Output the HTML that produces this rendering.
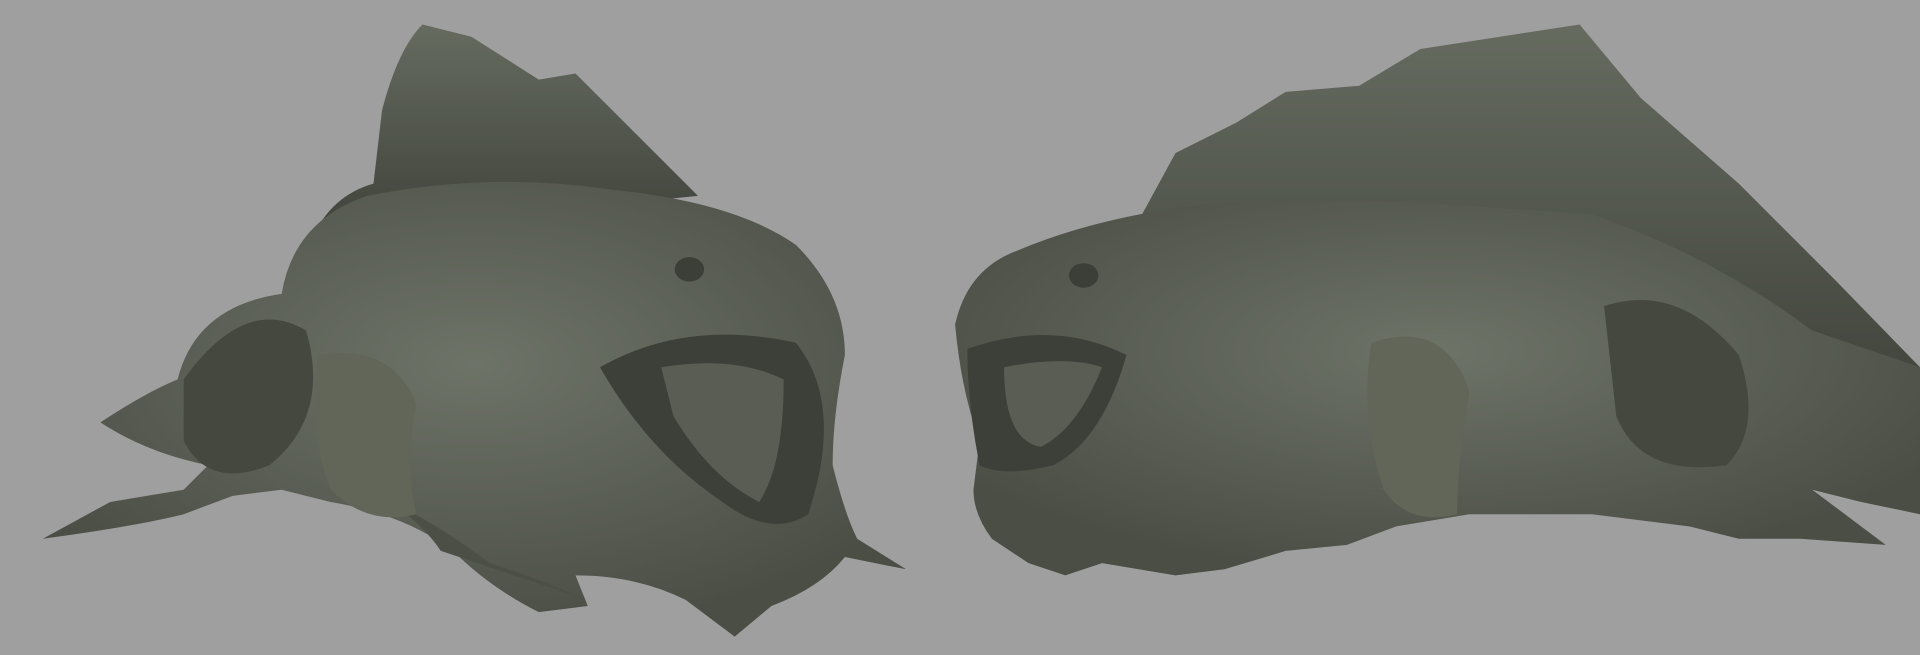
<!DOCTYPE html>
<html><head><meta charset="utf-8"><style>
html,body{margin:0;padding:0;background:#9f9f9f;width:1920px;height:655px;overflow:hidden}
svg{display:block}
</style></head><body>
<svg width="1920" height="655" viewBox="0 0 1568 535" preserveAspectRatio="none">
<defs>
<radialGradient id="g" cx="50%" cy="40%" r="60%">
<stop offset="0" stop-color="#6e7368"/><stop offset="1" stop-color="#4a4e45"/>
</radialGradient>
<linearGradient id="s" x1="0" y1="0" x2="0" y2="1">
<stop offset="0" stop-color="#666b60"/><stop offset="1" stop-color="#3e423a"/>
</linearGradient>
</defs>
<rect width="1568" height="535" fill="#9f9f9f"/>
<!-- LEFT creature -->
<path d="M255,195 Q270,160 305,150 L312,90 Q325,40 345,20 L385,30 L440,65 L470,60 L520,110 L570,160 L470,170 L330,165 Z" fill="url(#s)"/>
<path d="M82,345 Q120,320 145,310 Q160,250 230,240 Q240,180 300,160 Q400,140 500,155 Q600,165 650,200 Q690,240 690,290 Q680,340 680,380 Q690,420 700,440 L740,465 L690,455 Q670,480 630,495 L600,520 L560,490 Q520,470 470,470 L480,495 L440,500 Q400,480 370,450 Q330,420 270,410 L230,400 L190,405 L150,420 Q110,430 35,440 L90,410 L150,400 L170,380 Q120,370 82,345 Z" fill="url(#g)"/>
<path d="M300,400 Q340,420 360,450 L420,470 L480,490 L430,470 L400,460 Q360,430 320,410 Z" fill="#4b4f46"/>
<path d="M150,310 Q200,240 250,270 Q270,340 220,380 Q170,400 150,360 Z" fill="#44483f"/>
<path d="M490,300 Q560,260 650,280 Q690,330 660,420 Q630,440 590,410 Q530,370 490,300 Z" fill="#3d4038"/>
<path d="M540,300 Q600,290 640,310 Q640,380 620,410 Q580,390 550,340 Z" fill="#595d53"/>
<ellipse cx="563" cy="220" rx="12" ry="10" fill="#3c3f37"/>
<path d="M260,290 Q320,280 340,330 Q330,380 340,420 Q300,430 270,400 Q250,350 260,290 Z" fill="#616659"/>
<!-- RIGHT creature -->
<path d="M930,180 L960,125 L1010,100 L1050,75 L1110,70 L1160,40 L1290,20 L1340,80 L1420,150 L1500,230 L1568,300 L1568,340 L1400,230 L1200,170 L1000,175 Z" fill="url(#s)"/>
<path d="M780,265 Q790,220 830,205 Q900,175 1000,165 L1150,165 L1300,175 Q1400,210 1480,270 L1568,300 L1568,420 L1520,410 L1480,400 L1540,445 L1470,440 L1420,440 L1380,430 L1300,420 L1200,420 L1140,430 L1100,445 L1050,450 L1000,465 L960,470 L900,460 L870,470 L840,460 L810,440 Q795,420 795,400 L800,360 Q785,320 780,265 Z" fill="url(#g)"/>
<path d="M1310,250 Q1370,230 1420,290 Q1440,350 1410,380 Q1340,390 1320,340 Z" fill="#44483f"/>
<path d="M790,285 Q860,260 920,290 Q900,360 860,380 Q820,390 800,380 Q790,330 790,285 Z" fill="#3d4038"/>
<path d="M820,300 Q870,290 900,300 Q880,350 850,365 Q820,360 820,300 Z" fill="#595d53"/>
<ellipse cx="885" cy="225" rx="12" ry="10" fill="#3c3f37"/>
<path d="M1120,280 Q1180,260 1200,320 Q1190,380 1190,420 Q1150,430 1130,400 Q1110,340 1120,280 Z" fill="#616659"/>
</svg>
</body></html>
